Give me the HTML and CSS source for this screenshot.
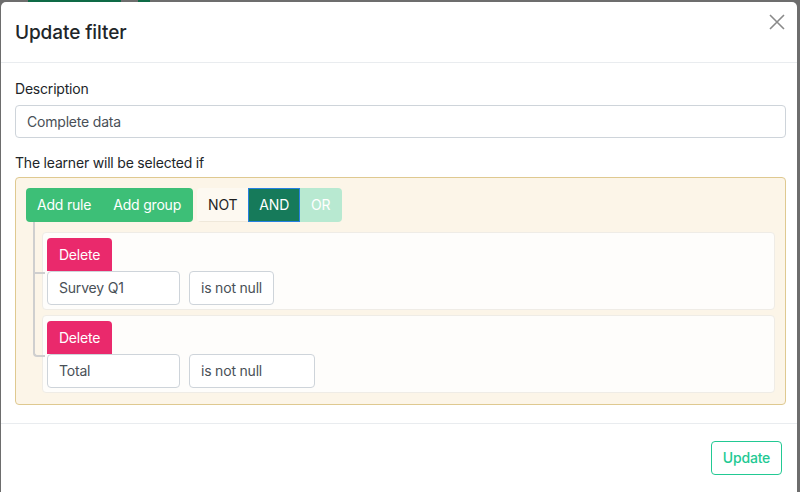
FILE: index.html
```html
<!DOCTYPE html>
<html>
<head>
<meta charset="utf-8">
<link rel="stylesheet" href="styles.css">
</head>
<body>
<div class="backdrop-bar bar-a"></div>
<div class="backdrop-bar bar-b"></div>
<div class="modal">
  <div class="modal-header">
    <h5 class="modal-title">Update filter</h5>
    <button class="close" aria-label="Close">
      <svg width="16" height="16" viewBox="0 0 16 16"><path d="M1 1 L15 15 M15 1 L1 15" stroke="#8a8a8a" stroke-width="1.6" fill="none"/></svg>
    </button>
  </div>
  <div class="modal-body">
    <label class="form-label">Description</label>
    <div class="form-control">Complete data</div>
    <label class="form-label second">The learner will be selected if</label>
    <div class="qb-group">
      <div class="group-header">
        <div class="btn-group">
          <span class="btn btn-green">Add rule</span>
          <span class="btn btn-green">Add group</span>
        </div>
        <div class="btn-group cond">
          <span class="btn btn-not">NOT</span>
          <span class="btn btn-and">AND</span>
          <span class="btn btn-or">OR</span>
        </div>
      </div>
      <div class="rules-list">
        <div class="rule">
          <div class="rule-head"><span class="btn btn-delete">Delete</span></div>
          <div class="rule-fields">
            <div class="field field-name">Survey Q1</div>
            <div class="field field-op">is not null</div>
          </div>
        </div>
        <div class="rule">
          <div class="rule-head"><span class="btn btn-delete">Delete</span></div>
          <div class="rule-fields">
            <div class="field field-name">Total</div>
            <div class="field field-op wide">is not null</div>
          </div>
        </div>
      </div>
    </div>
  </div>
  <div class="modal-footer">
    <span class="btn btn-update">Update</span>
  </div>
</div>
</body>
</html>
```
FILE: styles.css
```css
* { box-sizing: border-box; }
html, body { margin: 0; padding: 0; }
body {
  background: #6d6d6d;
  font-family: Inter, "Liberation Sans", sans-serif;
  font-size: 14px;
  letter-spacing: -0.2px;
  color: #212529;
  width: 800px;
  height: 492px;
  overflow: hidden;
  position: relative;
}
.backdrop-bar { position: absolute; top: 0; height: 2px; background: #0e6a46; }
.bar-a { left: 28px; width: 93px; }
.bar-b { left: 138px; width: 12px; }
.modal {
  position: relative;
  margin: 2px 0 0 1px;
  width: 796px;
  height: 490px;
  background: #fff;
  border-radius: 5px 5px 0 0;
  display: flex;
  flex-direction: column;
}
.modal-header {
  height: 61px;
  border-bottom: 1px solid #e9ecef;
  display: flex;
  align-items: center;
  justify-content: space-between;
  padding: 0 12px 0 14px;
}
.modal-title {
  margin: 0;
  font-size: 19px;
  font-weight: 500;
  line-height: 1.5;
  margin-top: 2px;
  letter-spacing: -0.1px;
}
.close {
  border: 0;
  background: none;
  padding: 0;
  margin-top: -21px;
  width: 16px;
  height: 16px;
}
.close svg { display: block; }
.modal-body {
  padding: 15px 11px 0 14px;
  height: 361px;
  flex: none;
  border-bottom: 1px solid #e9ecef;
}
.form-label {
  display: block;
  line-height: 21px;
  margin-bottom: 6px;
}
.form-label.second { margin-top: 14px; margin-bottom: 4px; }
.form-control {
  height: 33px;
  border: 1px solid #ced4da;
  border-radius: 4px;
  padding: 0 11px;
  line-height: 31px;
  color: #495057;
}
.qb-group {
  background: #fcf5e8;
  border: 1px solid #dfc990;
  border-radius: 4px;
  padding: 10px 10px 10px 10px;
  height: 228px;
}
.group-header { display: flex; gap: 4px; }
.btn-group { display: flex; border-radius: 4px; overflow: hidden; height: 34px; }
.btn {
  display: inline-flex;
  align-items: center;
  justify-content: center;
  font-size: 14px;
  line-height: 1;
  padding: 0 11px;
  white-space: nowrap;
}
.btn-green { background: #3dbf77; color: #fff; padding: 0 12px 0 11px; }
.btn-green:first-child { padding-right: 11px; }
.btn-not { background: #fdf9f1; color: #1f1f1f; border-bottom: 1px solid #efe8da; }
.btn-and { background: #167a5a; color: #fff; border: 1px solid #2680e0; padding: 0 10px; }
.btn-or { background: #b8e9d1; color: #fff; padding: 0 12px 0 11px; }
.rules-list {
  padding-left: 16px;
  padding-top: 10px;
  display: flex;
  flex-direction: column;
  gap: 5px;
}
.rule {
  position: relative;
  background: #fefdfb;
  border: 1px solid #efece6;
  border-radius: 4px;
  padding: 5px 4px;
  height: 78px;
}
.rule::before {
  content: "";
  position: absolute;
  left: -10px;
  top: -11px;
  width: 10px;
  height: 50px;
  border-left: 2px solid #cfcfcf;
  border-bottom: 2px solid #cfcfcf;
}
.rule + .rule::before { top: -6px; height: 45px; border-bottom-left-radius: 4px; }
.rule::after {
  content: "";
  position: absolute;
  left: -10px;
  top: 38px;
  height: 46px;
  border-left: 2px solid #cfcfcf;
}
.rule:last-child::after { display: none; }
.rule-head { height: 33px; display: flex; }
.btn-delete {
  background: #ea296c;
  color: #fff;
  border-radius: 4px 4px 0 0;
  height: 33px;
  width: 65px;
  padding: 0;
}
.rule-fields { display: flex; gap: 9px; }
.field {
  height: 34px;
  border: 1px solid #ced4da;
  border-radius: 4px;
  padding: 0 11px;
  line-height: 32px;
  color: #495057;
  background: #fff;
  white-space: nowrap;
}
.field-name { width: 133px; }
.field-op { width: 85px; }
.field-op.wide { width: 126px; }
.modal-footer {
  display: flex;
  justify-content: flex-end;
  padding: 17px 15px 0 0;
}
.btn-update {
  border: 1px solid #22c993;
  color: #22c993;
  border-radius: 4px;
  height: 34px;
  width: 71px;
  padding: 0;
  font-weight: 500;
}
```
